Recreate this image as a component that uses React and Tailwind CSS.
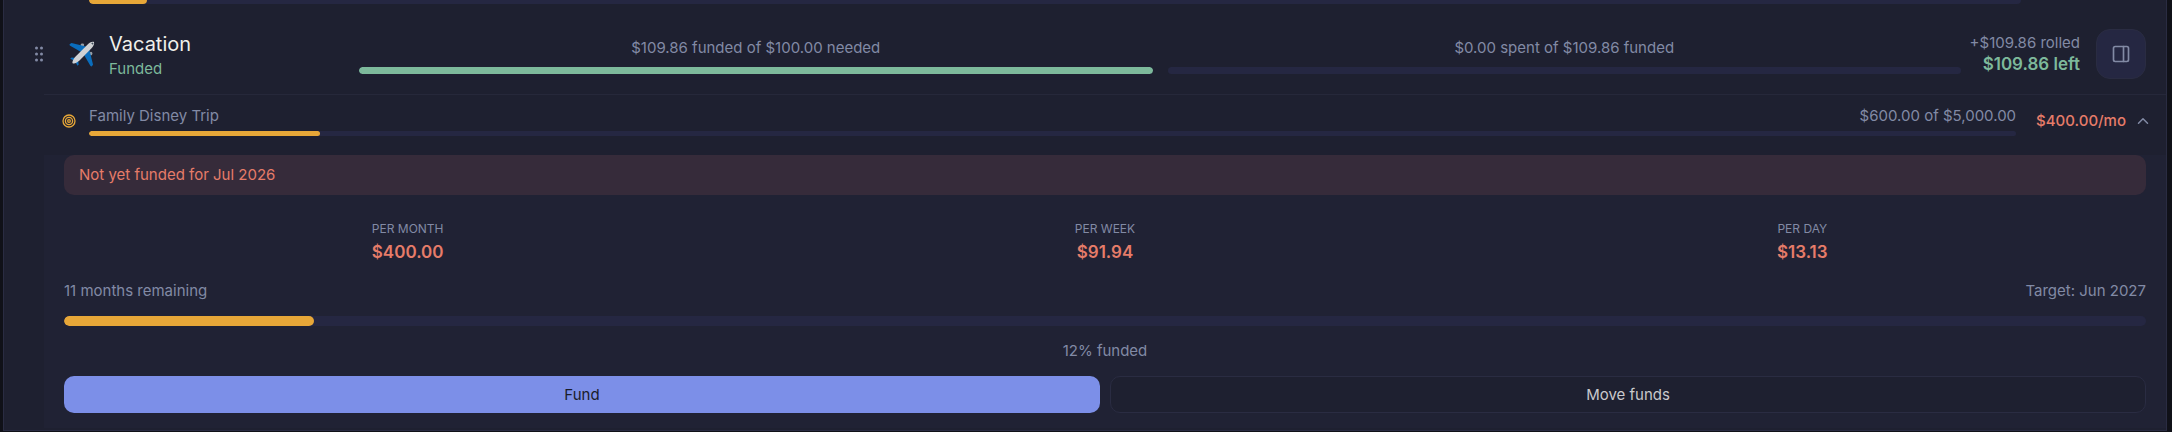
import { useState } from "react";
import { ChevronUp, PanelRight } from "lucide-react";

const RATES = [
  { label: "Per month", value: "$400.00" },
  { label: "Per week", value: "$91.94" },
  { label: "Per day", value: "$13.13" },
];

function Bar({ percent, label, height, color }) {
  return (
    <div
      role="progressbar"
      aria-label={label}
      aria-valuenow={percent}
      className={`w-full overflow-hidden rounded-full bg-[#252742] ${height}`}
    >
      <div className={`h-full rounded-full ${color}`} style={{ width: `${percent}%` }} />
    </div>
  );
}

function DragHandle() {
  return (
    <button type="button" aria-label="Reorder" className="w-2 shrink-0 cursor-grab text-[#8289a4]">
      <svg viewBox="0 0 8 16" width="8" height="16" fill="currentColor">
        {[2, 8, 14].map((y) => (
          <g key={y}>
            <circle cx="1.5" cy={y} r="1.5" />
            <circle cx="6.5" cy={y} r="1.5" />
          </g>
        ))}
      </svg>
    </button>
  );
}

function Airplane() {
  return (
    <svg viewBox="0 0 26 26" className="size-[26px] shrink-0" aria-hidden="true">
      <g fill="#9aa0a8">
        <ellipse cx="13.4" cy="4" rx="1.8" ry="1.4" />
        <ellipse cx="22" cy="12.6" rx="1.4" ry="1.8" />
        <ellipse cx="9" cy="6" rx="1" ry="1" />
      </g>
      <path d="M0.5 3.2 2.5 2 18 5.8 12.5 11.2 0.8 4.6Z" fill="#0a6dbd" />
      <path d="M22.8 25.4 24 23.5 20.2 8 14.8 13.5 21.5 25Z" fill="#0a6dbd" />
      <path d="M1.2 17.4 2.6 16.4 8.6 17.2 5.8 20.4Z" fill="#0a6dbd" />
      <path d="M8.6 24.8 9.6 23.4 9 17.4 5.8 20.2Z" fill="#0a6dbd" />
      <path
        d="M25 1C22.8 0.4 20.4 1.7 18.4 3.7L6.6 15.5C5 17.3 3.8 19.2 3.4 21.2C3.3 22.2 3.9 22.7 4.8 22.6C6.8 22.2 8.7 21 10.5 19.4L22.3 7.6C24.3 5.6 25.6 3.2 25 1Z"
        fill="#cfd1d4"
      />
      <path d="M22.2 2.3 23.7 3.8 24.6 2.6 23.4 1.5Z" fill="#3d4a58" />
    </svg>
  );
}

function GoalIcon() {
  return (
    <svg viewBox="0 0 14 14" className="size-3.5 shrink-0" fill="none" stroke="#e7a738" strokeWidth="1.3" aria-hidden="true">
      <circle cx="7" cy="7" r="6" />
      <circle cx="7" cy="7" r="3.6" />
      <circle cx="7" cy="7" r="1.3" />
    </svg>
  );
}

export default function App() {
  const [open, setOpen] = useState(true);

  return (
    <div className="bg-[#101118] pr-[5px] pb-px pl-[3px] font-['Inter','Liberation_Sans',sans-serif] text-[15px] leading-5 text-[#828aa5]">
      <main className="border-x border-b border-[#2a2c42] bg-[#1e2030] pb-0.5">
        {/* tail of the goal above */}
        <div className="mr-[145px] ml-[85px] h-1 overflow-hidden rounded-b-full bg-[#252742]">
          <div className="h-full w-[3%] rounded-b-full bg-[#e7a738]" />
        </div>

        <section className="flex h-[90px] items-center pt-2.5 pr-5 pl-[31px]">
          <DragHandle />
          <div className="ml-[26px] flex w-[290px] shrink-0 items-center gap-3.5">
            <Airplane />
            <div className="pt-1">
              <h2 className="text-xl leading-[26px] text-[#f0f0ea]">Vacation</h2>
              <p className="leading-6 text-[#7db99b]">Funded</p>
            </div>
          </div>

          <div className="grid flex-1 grid-cols-2 gap-[15px] pt-1 text-center">
            <div>
              <p className="mb-[9px]">$109.86 funded of $100.00 needed</p>
              <Bar percent={100} label="Funded" height="h-[7px]" color="bg-[#7db99b]" />
            </div>
            <div>
              <p className="mb-[9px]">$0.00 spent of $109.86 funded</p>
              <Bar percent={0} label="Spent" height="h-[7px]" color="bg-[#7db99b]" />
            </div>
          </div>

          <div className="w-[119px] shrink-0 text-right whitespace-nowrap">
            <p>+$109.86 rolled</p>
            <p className="text-[17px] leading-[22px] font-semibold text-[#7db99b]">$109.86 left</p>
          </div>
          <button
            type="button"
            aria-label="Open details"
            className="ml-4 flex size-[50px] shrink-0 items-center justify-center rounded-[14px] border border-[#2a2c42] bg-[#252742]"
          >
            <PanelRight size={20} strokeWidth={2} />
          </button>
        </section>

        <section className="ml-10 border-t border-[#26283a]">
          <div className="flex h-[60px] items-center pr-3.5 pb-[9px] pl-[18px]">
            <GoalIcon />
            <div className="ml-[13px] flex-1">
              <div className="mb-[5px] flex justify-between">
                <h3>Family Disney Trip</h3>
                <span>$600.00 of $5,000.00</span>
              </div>
              <Bar percent={12} label="Family Disney Trip" height="h-[5px]" color="bg-[#e7a738]" />
            </div>
            <button
              type="button"
              aria-expanded={open}
              onClick={() => setOpen(!open)}
              className="ml-5 flex shrink-0 items-center gap-2 font-medium text-[#e67c69]"
            >
              $400.00/mo
              <ChevronUp size={18} className={open ? "text-[#828aa5]" : "rotate-180 text-[#828aa5]"} />
            </button>
          </div>

          {open && (
            <div className="bg-[#202234] px-5 pb-[15px]">
              <p className="rounded-[10px] bg-[#362b3a] px-[15px] py-2.5 text-[#e67c69]">
                Not yet funded for Jul 2026
              </p>

              <dl className="mt-[25px] grid grid-cols-3 gap-2.5 text-center">
                {RATES.map((rate) => (
                  <div key={rate.label}>
                    <dt className="text-xs leading-[18px] uppercase">{rate.label}</dt>
                    <dd className="text-[17px] leading-7 font-semibold text-[#e67c69]">{rate.value}</dd>
                  </div>
                ))}
              </dl>

              <div className="my-[15px] flex justify-between">
                <span>11 months remaining</span>
                <span>Target: Jun 2027</span>
              </div>
              <Bar percent={12} label="Goal progress" height="h-2.5" color="bg-[#e7a738]" />
              <p className="my-[15px] text-center">12% funded</p>

              <div className="grid grid-cols-2 gap-2.5">
                <button type="button" className="h-[37px] rounded-[10px] bg-[#7c8fe8] text-[#1a1c2a]">
                  Fund
                </button>
                <button type="button" className="h-[37px] rounded-[10px] border border-[#2a2c42] bg-[#1e2030] text-[#c9c9cc]">
                  Move funds
                </button>
              </div>
            </div>
          )}
        </section>
      </main>
    </div>
  );
}
